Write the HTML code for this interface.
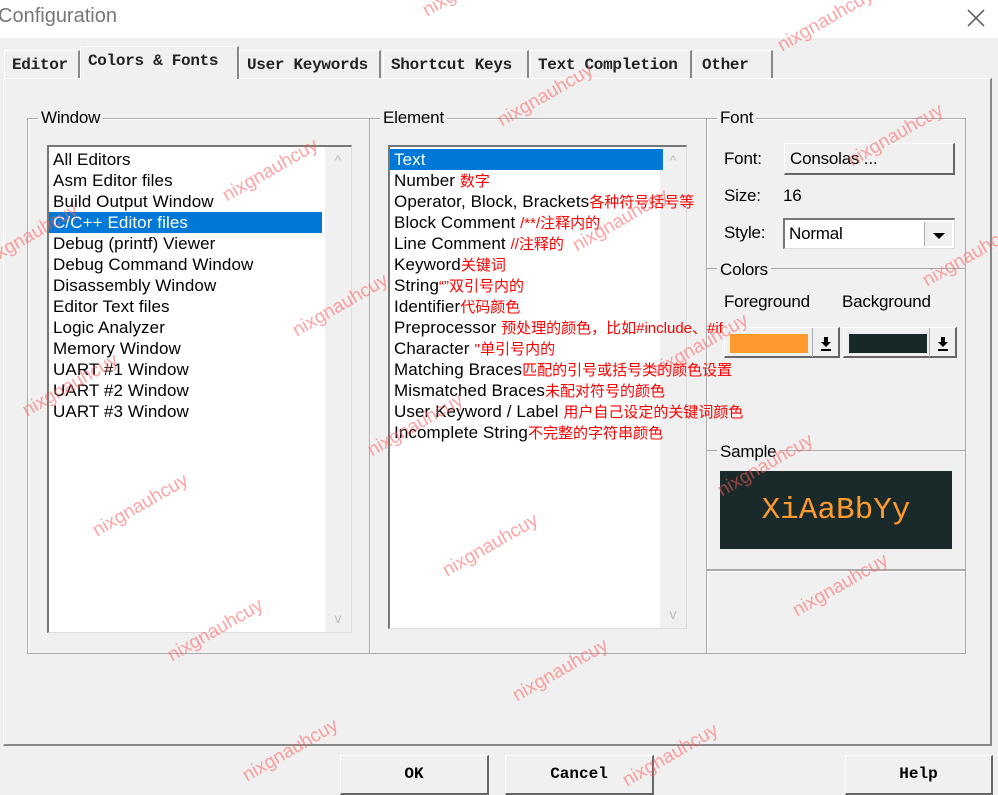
<!DOCTYPE html>
<html><head><meta charset="utf-8">
<style>
*{margin:0;padding:0;box-sizing:border-box}
body{width:998px;height:794px;background:#f0f0f0;position:relative;overflow:hidden;font-family:"Liberation Sans","Noto Sans CJK SC",sans-serif;color:#000}
.a{position:absolute}
.title{left:0;top:0;width:998px;height:38px;background:#fff}
.title span{position:absolute;left:-2px;top:5px;font-size:20px;color:#777}
.tab{position:absolute;top:50px;height:28px;border:1px solid #fff;border-right:2px solid #888;border-bottom:none;font-family:"Liberation Mono",monospace;font-weight:bold;font-size:16px;padding:5px 0 0 7px;background:#f0f0f0;letter-spacing:-0.3px;color:#222}
.panel{left:3px;top:78px;width:989px;height:668px;border-top:1px solid #fff;border-left:1px solid #fff;border-right:2px solid #888;border-bottom:2px solid #888}
.grp{position:absolute;border:1px solid #aaa;box-shadow:1px 1px 0 #fff inset}
.lbl{position:absolute;background:#f0f0f0;font-size:17px;padding:0 3px;letter-spacing:-0.2px}
.lb{position:absolute;background:#fff;border-top:2px solid #777;border-left:2px solid #777;border-right:1px solid #ddd;border-bottom:1px solid #ddd}
.it{position:absolute;left:4px;font-size:17px;height:21px;line-height:21px;letter-spacing:0.1px;white-space:nowrap}
.sel{background:#0078d7;color:#fff}
.r{color:#f00;font-size:15px;letter-spacing:0}
.sb{position:absolute;right:0;top:0;bottom:0;width:26px;background:#f0f0f0;color:#bbb;font-size:14px;text-align:center}
.btn{position:absolute;background:#f0f0f0;border-top:1px solid #fff;border-left:1px solid #fff;border-right:2px solid #666;border-bottom:2px solid #666;font-family:"Liberation Mono",monospace;font-weight:bold;font-size:16px;text-align:center}
.wm{position:absolute;color:rgba(255,90,90,.55);font-size:19px;transform:rotate(-30deg);transform-origin:left bottom;white-space:nowrap}
.dd{position:absolute;width:28px;top:2px;bottom:2px;right:2px;background:#f0f0f0;border-left:1px solid #aaa}
</style></head><body>
<div class="a title"><span>Configuration</span>
<svg class="a" style="left:966px;top:8px" width="20" height="20"><path d="M2 2L18 18M18 2L2 18" stroke="#555" stroke-width="1.5"/></svg></div>

<div class="a panel"></div>
<div class="tab" style="left:4px;width:76px">Editor</div>
<div class="tab" style="left:80px;top:46px;height:33px;width:159px;border-bottom:none">Colors &amp; Fonts</div>
<div class="tab" style="left:239px;width:142px">User Keywords</div>
<div class="tab" style="left:383px;width:146px">Shortcut Keys</div>
<div class="tab" style="left:530px;width:162px">Text Completion</div>
<div class="tab" style="left:694px;width:79px">Other</div>

<div class="grp" style="left:27px;top:118px;width:343px;height:536px"></div>
<div class="lbl" style="left:38px;top:108px">Window</div>
<div class="grp" style="left:369px;top:118px;width:338px;height:536px"></div>
<div class="lbl" style="left:380px;top:108px">Element</div>
<div class="grp" style="left:706px;top:118px;width:260px;height:452px"></div>
<div class="lbl" style="left:717px;top:108px">Font</div>
<div class="grp" style="left:706px;top:570px;width:260px;height:84px"></div>
<div class="a" style="left:707px;top:268px;width:258px;border-top:1px solid #aaa"></div>
<div class="lbl" style="left:717px;top:260px">Colors</div>
<div class="a" style="left:707px;top:450px;width:258px;border-top:1px solid #aaa"></div>
<div class="lbl" style="left:717px;top:442px">Sample</div>

<div class="lb" style="left:47px;top:145px;width:305px;height:488px">
<div class="sb"><div style="margin-top:5px">^</div><div style="position:absolute;bottom:6px;width:26px">v</div></div>
<div class="it" style="top:2px">All Editors</div>
<div class="it" style="top:23px">Asm Editor files</div>
<div class="it" style="top:44px">Build Output Window</div>
<div class="it sel" style="top:65px;left:0;width:273px;padding-left:4px">C/C++ Editor files</div>
<div class="it" style="top:86px">Debug (printf) Viewer</div>
<div class="it" style="top:107px">Debug Command Window</div>
<div class="it" style="top:128px">Disassembly Window</div>
<div class="it" style="top:149px">Editor Text files</div>
<div class="it" style="top:170px">Logic Analyzer</div>
<div class="it" style="top:191px">Memory Window</div>
<div class="it" style="top:212px">UART #1 Window</div>
<div class="it" style="top:233px">UART #2 Window</div>
<div class="it" style="top:254px">UART #3 Window</div>
</div>

<div class="lb" style="left:388px;top:145px;width:299px;height:484px">
<div class="sb"><div style="margin-top:5px">^</div><div style="position:absolute;bottom:6px;width:26px">v</div></div>
<div class="it sel" style="top:2px;left:0;width:273px;padding-left:4px">Text</div>
<div class="it" style="top:23px">Number <span class="r">数字</span></div>
<div class="it" style="top:44px">Operator, Block, Brackets<span class="r">各种符号括号等</span></div>
<div class="it" style="top:65px">Block Comment <span class="r">/**/注释内的</span></div>
<div class="it" style="top:86px">Line Comment <span class="r">//注释的</span></div>
<div class="it" style="top:107px">Keyword<span class="r">关键词</span></div>
<div class="it" style="top:128px">String<span class="r">“”双引号内的</span></div>
<div class="it" style="top:149px">Identifier<span class="r">代码颜色</span></div>
<div class="it" style="top:170px">Preprocessor <span class="r">预处理的颜色，比如#include、#if</span></div>
<div class="it" style="top:191px">Character <span class="r">''单引号内的</span></div>
<div class="it" style="top:212px">Matching Braces<span class="r">匹配的引号或括号类的颜色设置</span></div>
<div class="it" style="top:233px">Mismatched Braces<span class="r">未配对符号的颜色</span></div>
<div class="it" style="top:254px">User Keyword / Label <span class="r">用户自己设定的关键词颜色</span></div>
<div class="it" style="top:275px">Incomplete String<span class="r">不完整的字符串颜色</span></div>
</div>

<div class="lbl" style="left:721px;top:149px">Font:</div>
<div class="btn" style="left:784px;top:143px;width:171px;height:32px;font-family:'Liberation Sans',sans-serif;font-weight:normal;font-size:17px;text-align:left;padding:5px 0 0 5px;letter-spacing:-0.2px">Consolas ...</div>
<div class="lbl" style="left:721px;top:186px">Size:</div>
<div class="lbl" style="left:780px;top:186px">16</div>
<div class="lbl" style="left:721px;top:223px">Style:</div>
<div class="lb" style="left:783px;top:218px;width:172px;height:31px;font-size:17px;padding:4px 0 0 4px;letter-spacing:-0.2px">Normal<div class="dd"><svg width="28" height="26"><path d="M8 11h12l-6 6z" fill="#000"/></svg></div></div>
<div class="lbl" style="left:721px;top:292px">Foreground</div>
<div class="lbl" style="left:839px;top:292px">Background</div>
<div class="btn" style="left:724px;top:327px;width:116px;height:31px"><div class="a" style="left:5px;top:6px;width:78px;height:19px;background:#ff9a2e"></div><div class="a" style="right:0;top:0;width:26px;height:29px;border-left:1px solid #aaa"><svg width="26" height="29"><path d="M11 9h4v5h3l-5 5-5-5h3z M8 21h10v2H8z" fill="#000"/></svg></div></div>
<div class="btn" style="left:843px;top:327px;width:114px;height:31px"><div class="a" style="left:5px;top:6px;width:78px;height:19px;background:#182828"></div><div class="a" style="right:0;top:0;width:26px;height:29px;border-left:1px solid #aaa"><svg width="26" height="29"><path d="M11 9h4v5h3l-5 5-5-5h3z M8 21h10v2H8z" fill="#000"/></svg></div></div>
<div class="a" style="left:720px;top:471px;width:232px;height:78px;background:#1a2a2a;color:#ff9a2e;font-family:'Liberation Mono',monospace;font-size:31px;text-align:center;line-height:80px">XiAaBbYy</div>

<div class="btn" style="left:340px;top:755px;width:149px;height:40px;padding-top:9px">OK</div>
<div class="btn" style="left:505px;top:755px;width:149px;height:40px;padding-top:9px">Cancel</div>
<div class="btn" style="left:845px;top:755px;width:148px;height:40px;padding-top:9px">Help</div>

<div class="wm" style="left:430px;top:0px">nixgnauhcuy</div>
<div class="wm" style="left:785px;top:35px">nixgnauhcuy</div>
<div class="wm" style="left:230px;top:185px">nixgnauhcuy</div>
<div class="wm" style="left:505px;top:110px">nixgnauhcuy</div>
<div class="wm" style="left:855px;top:150px">nixgnauhcuy</div>
<div class="wm" style="left:580px;top:235px">nixgnauhcuy</div>
<div class="wm" style="left:-10px;top:250px">nixgnauhcuy</div>
<div class="wm" style="left:300px;top:320px">nixgnauhcuy</div>
<div class="wm" style="left:930px;top:270px">nixgnauhcuy</div>
<div class="wm" style="left:660px;top:360px">nixgnauhcuy</div>
<div class="wm" style="left:30px;top:400px">nixgnauhcuy</div>
<div class="wm" style="left:375px;top:440px">nixgnauhcuy</div>
<div class="wm" style="left:725px;top:480px">nixgnauhcuy</div>
<div class="wm" style="left:100px;top:520px">nixgnauhcuy</div>
<div class="wm" style="left:450px;top:560px">nixgnauhcuy</div>
<div class="wm" style="left:800px;top:600px">nixgnauhcuy</div>
<div class="wm" style="left:175px;top:645px">nixgnauhcuy</div>
<div class="wm" style="left:520px;top:685px">nixgnauhcuy</div>
<div class="wm" style="left:250px;top:765px">nixgnauhcuy</div>
<div class="wm" style="left:630px;top:770px">nixgnauhcuy</div>
</body></html>
